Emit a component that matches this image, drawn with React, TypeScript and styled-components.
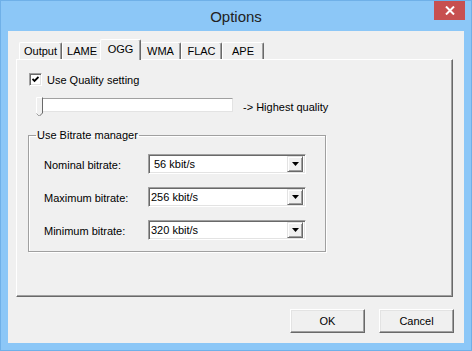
import React from 'react';
import styled, { createGlobalStyle } from 'styled-components';

const GlobalStyle = createGlobalStyle`
  html, body {
    margin: 0;
    padding: 0;
    background: #8cc7f7;
  }
  body {
    font-family: "Liberation Sans", Arial, sans-serif;
    font-size: 11px;
    color: #000;
  }
  * {
    box-sizing: border-box;
  }
`;

const Window = styled.div`
  width: 472px;
  height: 351px;
  background: #8cc7f7;
  border: 1px solid #6fb0e8;
  display: flex;
  flex-direction: column;
  padding: 0 7px 7px 7px;
`;

const TitleBar = styled.div`
  height: 30px;
  display: grid;
  grid-template-columns: 1fr auto 1fr;
  align-items: center;
`;

const Title = styled.div`
  grid-column: 2;
  font-size: 15px;
  color: #222;
  padding-top: 1px;
`;

const CloseButton = styled.div`
  grid-column: 3;
  justify-self: end;
  align-self: start;
  width: 31px;
  height: 19px;
  background: #c75050;
  margin-right: -1px;
  display: flex;
  align-items: center;
  justify-content: center;
`;

const Client = styled.div`
  flex: 1;
  background: #f0f0f0;
  padding-top: 8px;
  display: flex;
  flex-direction: column;
`;

const TabStrip = styled.div`
  display: flex;
  align-items: flex-end;
  height: 20px;
  margin: 0 11px 0 8px;
  padding-left: 3px;
`;

const Tab = styled.div<{ $w: number; $active?: boolean }>`
  width: ${p => p.$w}px;
  height: ${p => (p.$active ? 21 : 17)}px;
  margin: ${p => (p.$active ? '0 -1px -1px -2px' : '0')};
  position: relative;
  z-index: ${p => (p.$active ? 2 : 1)};
  background: #f0f0f0;
  border-style: solid;
  border-width: 1px 1px 0 1px;
  border-color: #fff #696969 #696969 #fff;
  box-shadow: inset -1px 0 #a0a0a0;
  border-radius: 2px 2px 0 0;
  display: flex;
  justify-content: center;
  padding-top: ${p => (p.$active ? 3 : 2)}px;
  line-height: 12px;
`;

const Panel = styled.div`
  height: 238px;
  margin: 0 11px 0 8px;
  border: 1px solid;
  border-color: #fff #696969 #696969 #fff;
  box-shadow: inset -1px -1px #a0a0a0;
  padding: 13px 0 0 11px;
  display: flex;
  flex-direction: column;
  align-items: flex-start;
`;

const CheckRow = styled.label`
  display: flex;
  align-items: center;
  gap: 5px;
  margin-left: 1px;
  height: 13px;
`;

const CheckBox = styled.span`
  width: 13px;
  height: 13px;
  background: #fff;
  border: 1px solid;
  border-color: #a0a0a0 #fff #fff #a0a0a0;
  box-shadow: inset 1px 1px #696969, inset -1px -1px #e3e3e3;
  display: flex;
  align-items: center;
  justify-content: center;
`;

const SliderRow = styled.div`
  display: flex;
  align-items: center;
  margin: 11px 0 0 8px;
  gap: 10px;
`;

const SliderWrap = styled.div`
  position: relative;
  padding: 1px 0 5px 4px;
`;

const Track = styled.div`
  width: 193px;
  height: 14px;
  background: #fff;
  border: 1px solid;
  border-color: #a0a0a0 #e3e3e3 #e3e3e3 #a0a0a0;
`;

const Thumb = styled.svg`
  position: absolute;
  left: 0;
  top: 0;
`;

const GroupBox = styled.fieldset`
  width: 298px;
  height: 123px;
  margin: 12px 0 0 0;
  padding: 12px 0 0 15px;
  border: 1px solid #a0a0a0;
  box-shadow: 1px 1px #fff, inset 1px 1px #fff;
  display: grid;
  grid-template-columns: 104px 158px;
  grid-auto-rows: 20px;
  row-gap: 13px;
  align-items: center;
  align-content: start;
`;

const Legend = styled.legend`
  padding: 0 1px;
  margin-left: -8px;
  line-height: 13px;
`;

const FieldLabel = styled.span`
  padding-top: 1px;
`;

const Combo = styled.div<{ $focus?: boolean }>`
  height: 20px;
  background: #fff;
  border: 1px solid;
  border-color: #a0a0a0 #fff #fff #a0a0a0;
  box-shadow: inset 1px 1px #696969, inset -1px -1px #e3e3e3;
  display: flex;
  align-items: center;
  padding: 0 2px 0 ${p => (p.$focus ? 5 : 2)}px;
`;

const ComboText = styled.span`
  flex: 1;
`;

const DropButton = styled.div`
  width: 16px;
  height: 16px;
  background: #f0f0f0;
  border: 1px solid;
  border-color: #e3e3e3 #696969 #696969 #e3e3e3;
  box-shadow: inset 1px 1px #fff, inset -1px -1px #a0a0a0;
  display: flex;
  align-items: center;
  justify-content: center;
`;

const ButtonRow = styled.div`
  display: flex;
  justify-content: flex-end;
  gap: 14px;
  margin: 12px 10px 0 0;
`;

const Button = styled.button`
  width: 75px;
  height: 24px;
  background: #f0f0f0;
  border: 1px solid;
  border-color: #fff #696969 #696969 #fff;
  box-shadow: inset -1px -1px #a0a0a0, inset 1px 1px #e3e3e3;
  font-family: "Liberation Sans", Arial, sans-serif;
  font-size: 11px;
  color: #000;
  padding: 0;
`;

const tabs = [
  { name: 'Output', w: 43 },
  { name: 'LAME', w: 40 },
  { name: 'OGG', w: 41, active: true },
  { name: 'WMA', w: 41 },
  { name: 'FLAC', w: 41 },
  { name: 'APE', w: 42 },
];

const bitrates = [
  { label: 'Nominal bitrate:', value: '56 kbit/s', focus: true },
  { label: 'Maximum bitrate:', value: '256 kbit/s' },
  { label: 'Minimum bitrate:', value: '320 kbit/s' },
];

export default function App() {
  return (
    <>
      <GlobalStyle />
      <Window>
        <TitleBar>
          <Title>Options</Title>
          <CloseButton>
            <svg width="10" height="9" viewBox="0 0 10 9">
              <path d="M1 0.5 L9 8.5 M9 0.5 L1 8.5" stroke="#fff" strokeWidth="2" />
            </svg>
          </CloseButton>
        </TitleBar>
        <Client>
          <TabStrip>
            {tabs.map(t => (
              <Tab key={t.name} $w={t.w} $active={t.active}>
                {t.name}
              </Tab>
            ))}
          </TabStrip>
          <Panel>
            <CheckRow>
              <CheckBox>
                <svg width="7" height="7" viewBox="0 0 7 7">
                  <path d="M0.5 3 L2.5 5 L6.5 1" stroke="#000" strokeWidth="1.8" fill="none" />
                </svg>
              </CheckBox>
              Use Quality setting
            </CheckRow>
            <SliderRow>
              <SliderWrap>
                <Track />
                <Thumb width="8" height="20" viewBox="0 0 8 20">
                  <path d="M0.5 19 V0.5 H6.5 V16 L3.5 19" fill="#f0f0f0" stroke="none" />
                  <path d="M0.5 16.5 V0.5 H6" stroke="#fff" fill="none" />
                  <path d="M6.5 0.5 V16 L3.5 19" stroke="#696969" fill="none" />
                  <path d="M0.5 16.5 L3 19" stroke="#a0a0a0" fill="none" />
                </Thumb>
              </SliderWrap>
              <span>-&gt; Highest quality</span>
            </SliderRow>
            <GroupBox>
              <Legend>Use Bitrate manager</Legend>
              {bitrates.map(b => (
                <React.Fragment key={b.label}>
                  <FieldLabel>{b.label}</FieldLabel>
                  <Combo $focus={b.focus}>
                    <ComboText>{b.value}</ComboText>
                    <DropButton>
                      <svg width="7" height="4" viewBox="0 0 7 4">
                        <path d="M0 0 H7 L3.5 4 Z" fill="#000" />
                      </svg>
                    </DropButton>
                  </Combo>
                </React.Fragment>
              ))}
            </GroupBox>
          </Panel>
          <ButtonRow>
            <Button>OK</Button>
            <Button>Cancel</Button>
          </ButtonRow>
        </Client>
      </Window>
    </>
  );
}
